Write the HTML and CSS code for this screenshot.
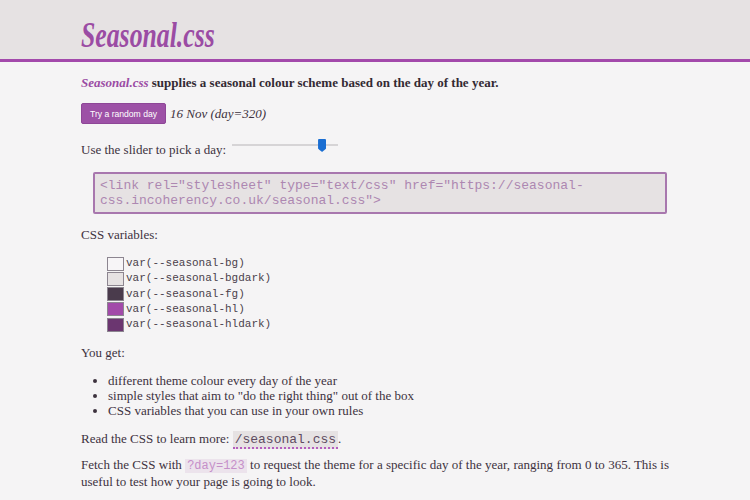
FILE: index.html
```html
<!DOCTYPE html>
<html lang="en">
<head>
<meta charset="utf-8">
<title>Seasonal.css</title>
<link rel="stylesheet" href="styles.css">
</head>
<body>
<header class="site-header">
  <div class="wrap">
    <h1 class="title">Seasonal.css</h1>
  </div>
</header>
<main class="wrap">
  <p class="intro"><a class="brand" href="#">Seasonal.css</a> supplies a seasonal colour scheme based on the day of the year.</p>
  <p class="random-row"><button class="btn" type="button">Try a random day</button> <em class="date">16 Nov (day=320)</em></p>
  <p class="slider-row">Use the slider to pick a day: <input class="slider" type="range" min="0" max="365" value="320"></p>
  <pre class="code">&lt;link rel="stylesheet" type="text/css" href="https://seasonal-
css.incoherency.co.uk/seasonal.css"&gt;</pre>
  <p>CSS variables:</p>
  <ul class="vars">
    <li><span class="swatch sw-bg"></span><code>var(--seasonal-bg)</code></li>
    <li><span class="swatch sw-bgdark"></span><code>var(--seasonal-bgdark)</code></li>
    <li><span class="swatch sw-fg"></span><code>var(--seasonal-fg)</code></li>
    <li><span class="swatch sw-hl"></span><code>var(--seasonal-hl)</code></li>
    <li><span class="swatch sw-hldark"></span><code>var(--seasonal-hldark)</code></li>
  </ul>
  <p>You get:</p>
  <ul class="features">
    <li>different theme colour every day of the year</li>
    <li>simple styles that aim to "do the right thing" out of the box</li>
    <li>CSS variables that you can use in your own rules</li>
  </ul>
  <p class="read">Read the CSS to learn more: <a class="code-link" href="#">/seasonal.css</a>.</p>
  <p class="fetch">Fetch the CSS with <code class="param">?day=123</code> to request the theme for a specific day of the year, ranging from 0 to 365. This is useful to test how your page is going to look.</p>
</main>
</body>
</html>
```
FILE: styles.css
```css
html, body {
  margin: 0;
  padding: 0;
}
body {
  background: #f5f4f5;
  color: #3d323e;
  font-family: "Liberation Serif", "Times New Roman", serif;
  font-size: 13px;
  line-height: 15px;
}
.wrap {
  width: 588px;
  margin: 0 auto;
}
.site-header {
  background: #e6e2e3;
  border-bottom: 3px solid #a349ab;
  height: 59px;
}
.site-header .wrap {
  height: 59px;
  box-sizing: border-box;
  padding-top: 11px;
  display: flex;
  align-items: center;
}
.title {
  margin: 0;
  font-family: "Liberation Serif", "Times New Roman", serif;
  font-style: italic;
  font-weight: bold;
  font-size: 36px;
  line-height: 36px;
  color: #9b4ca4;
  display: inline-block;
  transform: scaleX(0.715);
  transform-origin: left center;
}
p {
  margin: 13px 0;
}
.intro {
  font-weight: bold;
  color: #332a33;
}
.brand {
  color: #9b4ca4;
  font-style: italic;
  text-decoration: none;
}
.random-row {
  display: flex;
  align-items: center;
  gap: 4px;
  height: 21px;
}
.btn {
  background: #9d51a6;
  color: #ffffff;
  border: 1px solid #8e4697;
  border-radius: 2px;
  font-family: "Liberation Sans", Arial, sans-serif;
  font-size: 8.6px;
  height: 21px;
  padding: 0 8px;
  cursor: pointer;
}
.date {
  font-size: 13px;
}
.slider-row {
  display: flex;
  align-items: center;
  gap: 6px;
  height: 16px;
  margin-top: 17px;
}
.slider {
  -webkit-appearance: none;
  appearance: none;
  width: 106px;
  height: 16px;
  margin: -8px 0 0;
  background: transparent;
}
.slider::-webkit-slider-runnable-track {
  height: 2px;
  background: #d6d4d6;
}
.slider::-webkit-slider-thumb {
  -webkit-appearance: none;
  appearance: none;
  width: 8px;
  height: 13px;
  margin-top: -5px;
  background: #1a6ed2;
  border-radius: 1px 1px 4px 4px;
  clip-path: polygon(0 0, 100% 0, 100% 75%, 50% 100%, 0 75%);
}
.code {
  margin: 15px 2px 13px 12px;
  padding: 4px 5px;
  background: #e6e2e3;
  border: 2px solid #a877ae;
  border-radius: 2px;
  color: #ad87b1;
  font-family: "Liberation Mono", "Courier New", monospace;
  font-size: 13px;
  line-height: 15px;
  white-space: pre-wrap;
}
.vars {
  list-style: none;
  margin: 14px 0 13px;
  padding: 0 0 0 26px;
}
.vars li {
  display: flex;
  align-items: center;
  gap: 2px;
  height: 15.25px;
}
.vars code {
  font-family: "Liberation Mono", "Courier New", monospace;
  font-size: 11px;
  color: #4a3f4b;
}
.swatch {
  width: 17px;
  height: 14px;
  box-sizing: border-box;
  border: 1px solid #8c8590;
}
.sw-bg { background: #f7f5f7; }
.sw-bgdark { background: #e6e2e3; }
.sw-fg { background: #4a3b4c; }
.sw-hl { background: #a24aa9; }
.sw-hldark { background: #6b3670; }
.features {
  margin: 10px 0 13px;
  padding-left: 27px;
}
.features li {
  line-height: 15px;
}
.read {
  margin-bottom: 10px;
}
.fetch {
  margin-top: 10px;
  text-align: justify;
}
.code-link {
  font-family: "Liberation Mono", "Courier New", monospace;
  font-size: 13px;
  color: #5d4a60;
  background: #e6e2e3;
  padding: 1px 2px 0;
  text-decoration: none;
  border-bottom: 2px dotted #b45ebd;
}
.param {
  font-family: "Liberation Mono", "Courier New", monospace;
  font-size: 12px;
  color: #c58fc9;
  background: #ece3ec;
  padding: 0 2px;
}
```
